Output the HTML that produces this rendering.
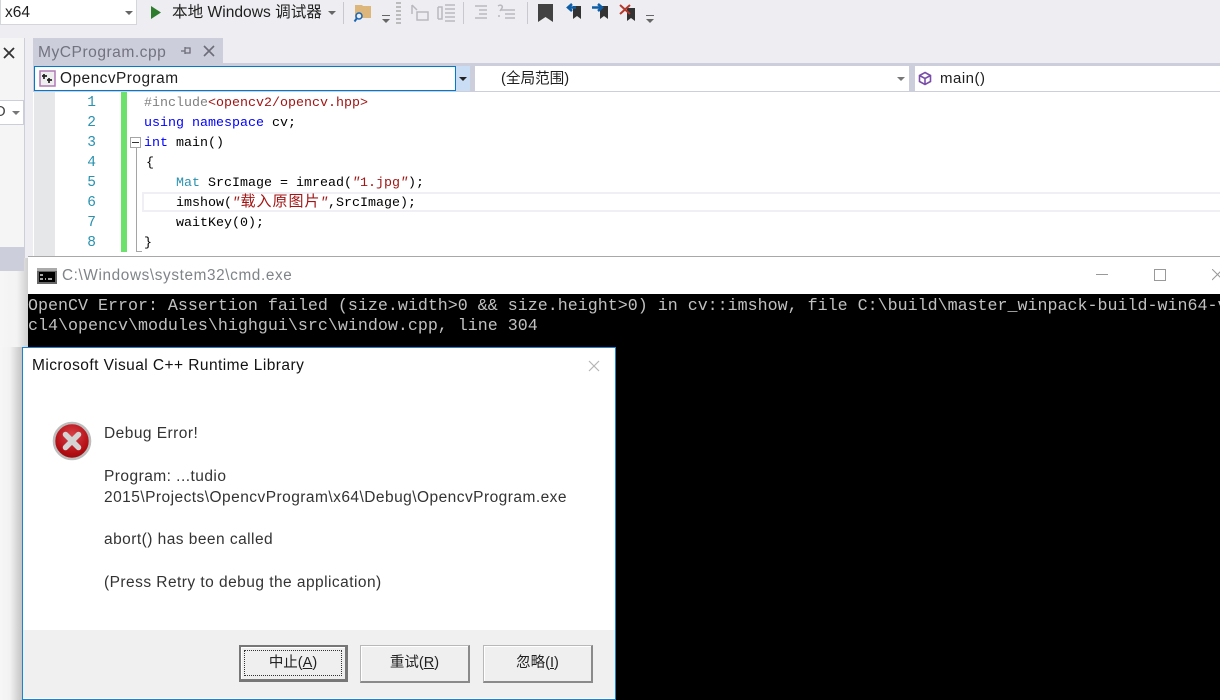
<!DOCTYPE html>
<html>
<head>
<meta charset="utf-8">
<style>
html,body{margin:0;padding:0;width:1220px;height:700px;overflow:hidden;background:#eeeef2}
body{position:relative;font-family:"Liberation Sans","Noto Sans CJK SC",sans-serif}
.a{position:absolute}
.t{position:absolute;white-space:pre;line-height:20px}
.code{font-family:"Liberation Mono","Noto Sans CJK SC",monospace;font-size:13.33px;color:#000;position:absolute;left:144px;white-space:pre;line-height:20px;height:20px}
.code .z{display:inline-block;width:16px;text-align:center;font-size:15px;line-height:16px}
.code i{font-style:italic}
.ln{position:absolute;width:40px;left:56px;text-align:right;font-family:"Liberation Mono",monospace;font-size:14.5px;color:#2b91af;line-height:20px}
.k{color:#0000ff}.s{color:#a31515}.g{color:#808080}.y{color:#2b91af}
.cmd{position:absolute;left:28px;font-family:"Liberation Mono",monospace;font-size:16.67px;color:#c0c0c0;white-space:pre;line-height:20px}
.d{position:absolute;left:104px;font-size:15.5px;letter-spacing:.46px;color:#333;white-space:pre;line-height:20px}
.btn{position:absolute;top:645px;width:107px;height:35px;background:#efefef;border:1px solid #b8b8b8;border-right:2px solid #8a8a8a;border-bottom:2px solid #8a8a8a;box-sizing:content-box;text-align:center;font-size:14.5px;line-height:35px;color:#222;box-shadow:inset 1px 1px 0 #fff}
</style>
</head>
<body>
<!-- toolbar -->
<div class="a" style="left:0;top:0;width:137px;height:25px;background:#fff;border:1px solid #d5d5dc;border-top:0;box-sizing:border-box"></div>
<div class="t" style="left:5px;top:3px;font-size:15.5px;color:#1e1e1e">x64</div>
<div class="a" style="left:125px;top:11px;width:0;height:0;border:4px solid transparent;border-top:4px solid #666"></div>
<svg class="a" style="left:150px;top:5px" width="12" height="15"><path d="M1 1L11 7.5L1 14Z" fill="#2d7d2d"/></svg>
<div class="t" style="left:172px;top:3px;font-size:15.6px;color:#1e1e1e">本地 Windows 调试器</div>
<div class="a" style="left:328px;top:11px;width:0;height:0;border:4px solid transparent;border-top:4px solid #666"></div>
<div class="a" style="left:343px;top:2px;width:1px;height:22px;background:#c8c8d0"></div>
<svg class="a" style="left:353px;top:3px" width="20" height="20"><path d="M2 2h7l1 1h8v12H2Z" fill="#dcb67a"/><circle cx="6" cy="13" r="3" fill="#eeeef2" stroke="#1a66b3" stroke-width="1.5"/><path d="M4 15L1.5 18.5" stroke="#1a66b3" stroke-width="2"/></svg>
<div class="a" style="left:382px;top:15px;width:8px;height:1px;background:#666"></div>
<div class="a" style="left:382px;top:19px;width:0;height:0;border:4px solid transparent;border-top:4px solid #666"></div>
<div class="a" style="left:396px;top:2px;width:5px;height:22px;background:repeating-linear-gradient(#bbb 0 2px,transparent 2px 4px)"></div>
<svg class="a" style="left:410px;top:3px" width="50" height="20" fill="none" stroke="#b9b9bf" stroke-width="1.5"><path d="M2 2v9M2 2l5 5"/><rect x="7" y="9" width="11" height="8"/><path d="M28 4v12M28 4h4v12h-4M35 2h10M35 6h10M35 10h10M35 14h10M35 18h10"/></svg>
<div class="a" style="left:463px;top:2px;width:1px;height:22px;background:#c8c8d0"></div>
<svg class="a" style="left:474px;top:3px" width="44" height="20" fill="none" stroke="#b9b9bf" stroke-width="1.5"><path d="M1 3h12M5 7h8M5 11h8M1 15h12M27 7h14M31 11h10M31 15h10M24 3c3-2 5 0 4 2l-2 3M25 12v2"/></svg>
<div class="a" style="left:527px;top:2px;width:1px;height:22px;background:#c8c8d0"></div>
<svg class="a" style="left:538px;top:2px" width="120" height="22"><path d="M0 2H15V20L7.5 15L0 20Z" fill="#424242"/><path d="M35 4H43V17L39 14L35 17Z" fill="#333"/><path d="M34 2L30 5.5L34 9" fill="none" stroke="#0e5ea8" stroke-width="2.5"/><path d="M31 5.5H38" stroke="#0e5ea8" stroke-width="2.5"/><path d="M62 4H70V17L66 14L62 17Z" fill="#333"/><path d="M60 2L64 5.5L60 9" fill="none" stroke="#0e5ea8" stroke-width="2.5"/><path d="M54 5.5H63" stroke="#0e5ea8" stroke-width="2.5"/><path d="M89 6H97V19L93 16L89 19Z" fill="#333"/><path d="M82 3L92 12M92 3L82 12" stroke="#b5382a" stroke-width="2"/></svg>
<div class="a" style="left:646px;top:15px;width:8px;height:1px;background:#666"></div>
<div class="a" style="left:646px;top:19px;width:0;height:0;border:4px solid transparent;border-top:4px solid #666"></div>

<!-- left panel -->
<div class="a" style="left:0;top:38px;width:25px;height:220px;background:#f5f5f5;border-right:1px solid #cccedb;box-sizing:border-box"></div>
<svg class="a" style="left:3px;top:47px" width="12" height="12"><path d="M1 1L11 11M11 1L1 11" stroke="#333" stroke-width="1.8"/></svg>
<div class="a" style="left:0;top:100px;width:24px;height:25px;background:#fff;border:1px solid #cccedb;border-left:0;box-sizing:border-box"></div>
<div class="t" style="left:-6px;top:102px;font-size:15px;color:#444">O</div>
<div class="a" style="left:12px;top:111px;width:0;height:0;border:4px solid transparent;border-top:4px solid #777"></div>
<!-- shadows beside windows -->
<div class="a" style="left:0;top:258px;width:28px;height:89px;background:linear-gradient(to right,#f6f6f6 0,#f3f3f3 17px,#cfcfcf 28px)"></div>
<div class="a" style="left:0;top:347px;width:22px;height:353px;background:linear-gradient(to right,#f6f6f6 0,#f2f2f2 10px,#c4c4c4 22px)"></div>
<div class="a" style="left:0;top:247px;width:24px;height:24px;background:#ccceDB"></div>

<!-- tab -->
<div class="a" style="left:33px;top:38px;width:190px;height:25px;background:#cccedb"></div>
<div class="t" style="left:38px;top:43px;font-size:15.6px;letter-spacing:.5px;color:#737380">MyCProgram.cpp</div>
<svg class="a" style="left:178px;top:44px" width="40" height="14" fill="none" stroke="#6d6d78" stroke-width="1.3"><path d="M3 7H7M7 3V10M7 4H12V9H7"/><path d="M26 2L36 12M36 2L26 12" stroke-width="1.6"/></svg>

<!-- nav band -->
<div class="a" style="left:33px;top:63px;width:1187px;height:29px;background:#cccedb"></div>
<div class="a" style="left:34px;top:66px;width:422px;height:25px;background:#fff;border:1px solid #007acc;box-sizing:border-box"></div>
<div class="a" style="left:456px;top:66px;width:14px;height:25px;background:#c9def5"></div>
<div class="a" style="left:459px;top:77px;width:0;height:0;border:4px solid transparent;border-top:4px solid #222"></div>
<div class="a" style="left:475px;top:66px;width:434px;height:25px;background:#fff"></div>
<div class="a" style="left:915px;top:66px;width:305px;height:25px;background:#fff"></div>
<svg class="a" style="left:39px;top:70px" width="18" height="17"><rect x="1" y="1" width="15" height="15" fill="#eee" stroke="#b07ab5" stroke-width="1.5"/><path d="M5 4v5M3 6h5M10 8v5M8 10h5" stroke="#222" stroke-width="1.7"/></svg>
<div class="t" style="left:60px;top:69px;font-size:15.4px;letter-spacing:.5px;color:#1e1e1e">OpencvProgram</div>
<div class="t" style="left:501px;top:69px;font-size:14.6px;color:#1e1e1e">(全局范围)</div>
<div class="a" style="left:897px;top:77px;width:0;height:0;border:4px solid transparent;border-top:4px solid #777"></div>
<svg class="a" style="left:918px;top:71px" width="14" height="15" fill="none" stroke="#7a4ea8" stroke-width="1.6"><path d="M7 1.5L12.5 4.5V10.5L7 13.5L1.5 10.5V4.5ZM1.5 4.5L7 7.5L12.5 4.5M7 7.5V13.5"/></svg>
<div class="t" style="left:940px;top:69px;font-size:15px;letter-spacing:.5px;color:#1e1e1e">main()</div>

<!-- editor -->
<div class="a" style="left:33px;top:92px;width:1187px;height:165px;background:#fff"></div>
<div class="a" style="left:34px;top:92px;width:21px;height:165px;background:#e6e7e8"></div>
<div class="a" style="left:121px;top:92px;width:6px;height:160px;background:#6ce26c"></div>
<div class="a" style="left:142px;top:192px;width:1078px;height:20px;box-sizing:border-box;border:2px solid #f0f0f4;border-right:0"></div>
<div class="ln" style="top:93px">1</div><div class="ln" style="top:113px">2</div><div class="ln" style="top:133px">3</div><div class="ln" style="top:153px">4</div><div class="ln" style="top:173px">5</div><div class="ln" style="top:193px">6</div><div class="ln" style="top:213px">7</div><div class="ln" style="top:233px">8</div>
<div class="a" style="left:130px;top:137px;width:11px;height:11px;border:1px solid #a5a5a5;box-sizing:border-box;background:#fff"></div>
<div class="a" style="left:132px;top:142px;width:7px;height:1px;background:#333"></div>
<div class="a" style="left:136px;top:148px;width:1px;height:103px;background:#a5a5a5"></div>
<div class="a" style="left:136px;top:251px;width:6px;height:1px;background:#a5a5a5"></div>
<div class="code" style="top:94px"><span class="g">#include</span><span class="s">&lt;opencv2/opencv.hpp&gt;</span></div>
<div class="code" style="top:114px"><span class="k">using</span> <span class="k">namespace</span> cv;</div>
<div class="code" style="top:134px"><span class="k">int</span> main()</div>
<div class="code" style="top:154px;left:146px">{</div>
<div class="code" style="top:174px">    <span class="y">Mat</span> SrcImage = imread(<span class="s"><i>"</i>1.jpg<i>"</i></span>);</div>
<div class="code" style="top:194px">    imshow(<span class="s"><i>"</i><span class="z">载</span><span class="z">入</span><span class="z">原</span><span class="z">图</span><span class="z">片</span><i>"</i></span>,SrcImage);</div>
<div class="code" style="top:214px">    waitKey(0);</div>
<div class="code" style="top:234px">}</div>

<!-- cmd window -->
<div class="a" style="left:28px;top:256px;width:1192px;height:38px;background:#fff;border-top:1px solid #a8a8a8;box-sizing:border-box"></div>
<div class="a" style="left:28px;top:294px;width:1192px;height:406px;background:#000"></div>
<svg class="a" style="left:37px;top:268px" width="20" height="16"><rect width="20" height="16" fill="#666"/><rect y="0" width="20" height="3" fill="#aaa"/><rect x="2" y="4" width="16" height="10" fill="#000"/><path d="M3 7h3M3 11h3M8 11h1M11 11h4" stroke="#ddd" stroke-width="1.4"/></svg>
<div class="t" style="left:62px;top:266px;font-size:15.3px;letter-spacing:.63px;color:#7f8488">C:\Windows\system32\cmd.exe</div>
<div class="a" style="left:1096px;top:274px;width:12px;height:1px;background:#999"></div>
<div class="a" style="left:1154px;top:269px;width:12px;height:12px;border:1px solid #999;box-sizing:border-box"></div>
<svg class="a" style="left:1212px;top:269px" width="8" height="12"><path d="M0 0L11 11M11 0L0 11" stroke="#999" stroke-width="1"/></svg>
<div class="cmd" style="top:297px">OpenCV Error: Assertion failed (size.width&gt;0 &amp;&amp; size.height&gt;0) in cv::imshow, file C:\build\master_winpack-build-win64-v</div>
<div class="cmd" style="top:317px">cl4\opencv\modules\highgui\src\window.cpp, line 304</div>

<!-- dialog -->
<div class="a" style="left:22px;top:347px;width:594px;height:353px;background:#fff;border:1px solid #1a84d0;box-sizing:border-box"></div>
<div class="t" style="left:32px;top:356px;font-size:15.5px;letter-spacing:.44px;color:#111">Microsoft Visual C++ Runtime Library</div>
<svg class="a" style="left:588px;top:360px" width="12" height="12"><path d="M1 1L11 11M11 1L1 11" stroke="#b5b5b5" stroke-width="1.2"/></svg>
<svg class="a" style="left:52px;top:421px" width="40" height="40">
<defs><radialGradient id="r" cx="50%" cy="35%" r="70%"><stop offset="0" stop-color="#d8424a"/><stop offset="0.7" stop-color="#b30e14"/><stop offset="1" stop-color="#8d0a0e"/></radialGradient></defs>
<circle cx="20" cy="20" r="18" fill="url(#r)" stroke="#bdbdbd" stroke-width="2.6"/>
<path d="M13.5 13.5L26.5 26.5M26.5 13.5L13.5 26.5" stroke="#d4d4d4" stroke-width="5.5" stroke-linecap="round"/>
</svg>
<div class="d" style="top:424px">Debug Error!</div>
<div class="d" style="top:467px">Program: ...tudio</div>
<div class="d" style="top:488px">2015\Projects\OpencvProgram\x64\Debug\OpencvProgram.exe</div>
<div class="d" style="top:530px">abort() has been called</div>
<div class="d" style="top:573px">(Press Retry to debug the application)</div>
<div class="a" style="left:23px;top:630px;width:592px;height:68px;background:#f0f0f0"></div>
<div class="btn" style="left:239px;border-color:#777;border-width:2px 3px 3px 2px;width:104px;height:32px;line-height:32px">中止(<u>A</u>)<div class="a" style="left:3px;top:3px;right:3px;bottom:3px;border:1px dotted #333"></div></div>
<div class="btn" style="left:360px">重试(<u>R</u>)</div>
<div class="btn" style="left:483px">忽略(<u>I</u>)</div>
</body>
</html>
